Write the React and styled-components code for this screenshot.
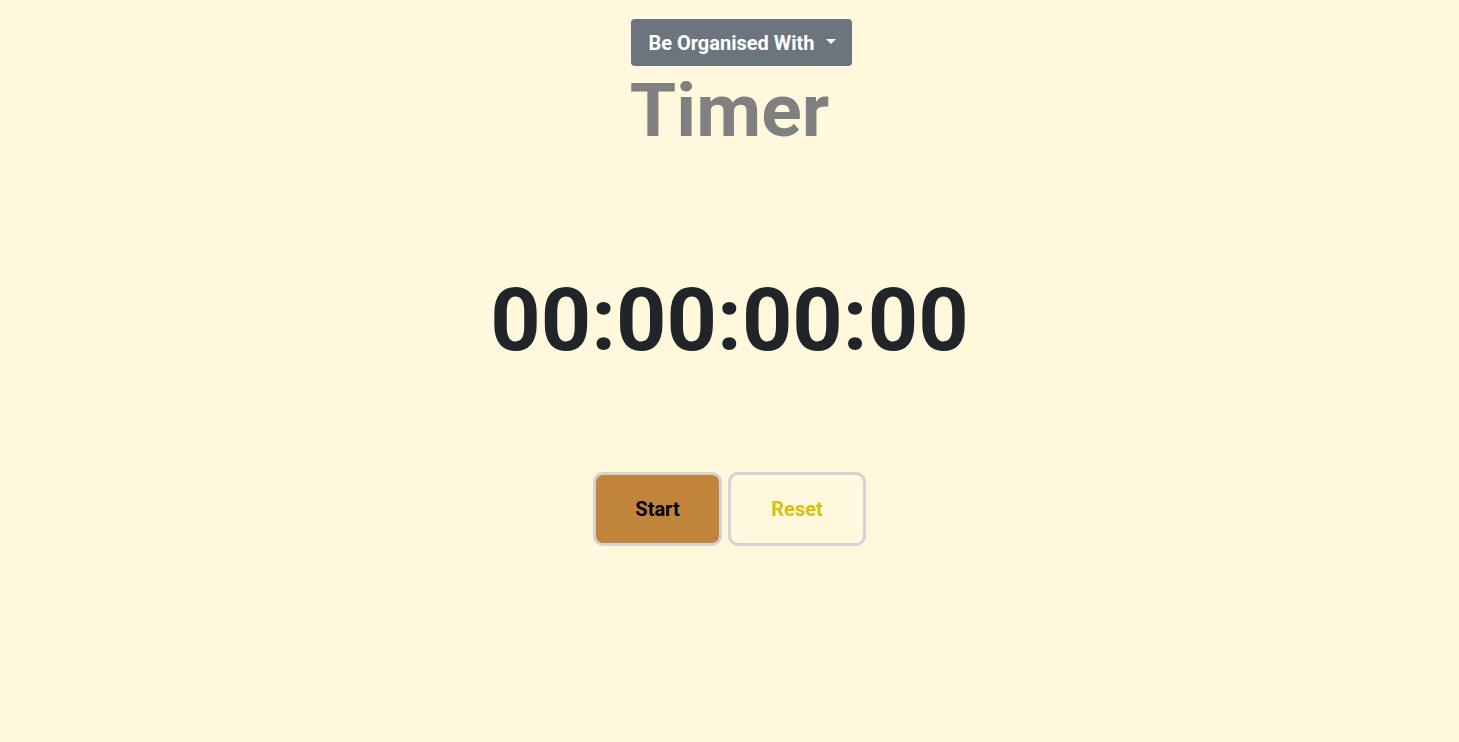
import styled, { createGlobalStyle } from "styled-components";

const GlobalStyle = createGlobalStyle`
  body {
    margin: 0;
    background: #fff8dc;
    font-family: Roboto, "Liberation Sans", sans-serif;
  }
`;

const Page = styled.div`
  display: flex;
  flex-direction: column;
  align-items: center;
  min-height: 742px;
  padding-top: 19px;
  box-sizing: border-box;
`;

const Dropdown = styled.button`
  display: flex;
  align-items: center;
  gap: 11px;
  height: 47px;
  margin-left: 24px;
  padding: 0 16px 0 17px;
  border: none;
  border-radius: 4px;
  background: #6c757d;
  color: #ffffff;
  font-family: Roboto, sans-serif;
  font-weight: 700;
  font-size: 20px;
  cursor: pointer;
`;

const Caret = styled.span`
  width: 0;
  height: 0;
  border-left: 5px solid transparent;
  border-right: 5px solid transparent;
  border-top: 5px solid #ffffff;
  margin-bottom: 3px;
`;

const Title = styled.h1`
  margin: 7px 0 0;
  color: #808080;
  font-size: 75px;
  font-weight: 700;
  line-height: 1;
`;

const Clock = styled.div`
  margin-top: 128px;
  color: #212529;
  font-size: 88px;
  font-weight: 700;
  line-height: 1;
`;

const Controls = styled.div`
  display: flex;
  gap: 6px;
  margin-top: 108px;
`;

const Btn = styled.button`
  box-sizing: border-box;
  height: 74px;
  width: ${(p) => p.$w}px;
  border: 3px solid #d3d3d3;
  border-radius: 10px;
  background: ${(p) => p.$bg};
  color: ${(p) => p.$color};
  font-family: Roboto, sans-serif;
  font-weight: 700;
  font-size: 20px;
  cursor: pointer;
`;

function App() {
  return (
    <>
      <GlobalStyle />
      <Page>
        <Dropdown>
          Be Organised With
          <Caret />
        </Dropdown>
        <Title>Timer</Title>
        <Clock>00:00:00:00</Clock>
        <Controls>
          <Btn $w={129} $bg="#c0843a" $color="#000000">
            Start
          </Btn>
          <Btn $w={138} $bg="transparent" $color="#d6c20c">
            Reset
          </Btn>
        </Controls>
      </Page>
    </>
  );
}

export default App;
